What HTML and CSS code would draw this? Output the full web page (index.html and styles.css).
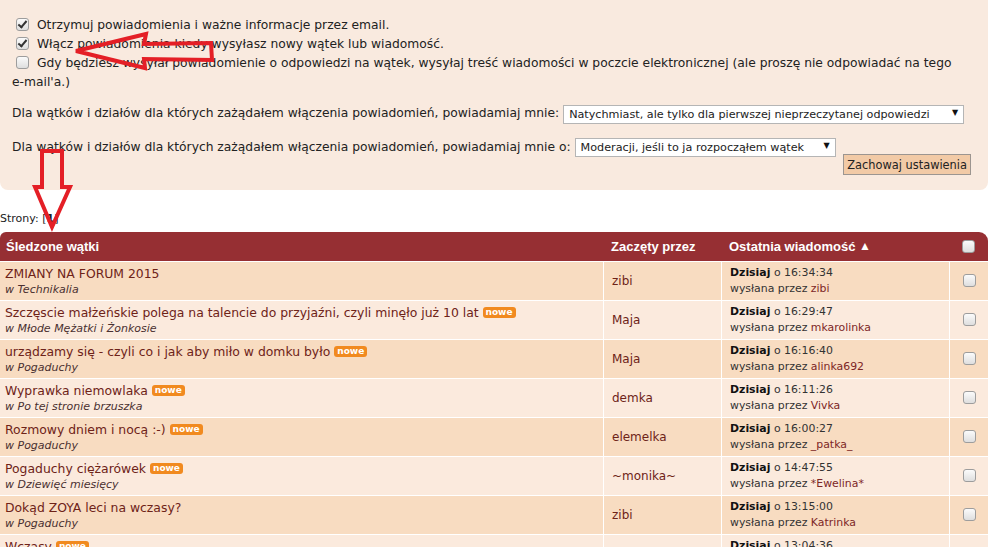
FILE: index.html
```html
<!DOCTYPE html>
<html lang="pl">
<head>
  <meta charset="UTF-8">
  <title>Śledzone wątki</title>
  <link rel="stylesheet" href="styles.css">
</head>
<body>

  <div class="prefs">
    <label class="opt"><input type="checkbox" checked> Otrzymuj powiadomienia i ważne informacje przez email.</label>
    <label class="opt"><input type="checkbox" checked> Włącz powiadomienia kiedy wysyłasz nowy wątek lub wiadomość.</label>
    <label class="opt"><input type="checkbox"> Gdy będziesz wysyłał powiadomienie o odpowiedzi na wątek, wysyłaj treść wiadomości w poczcie elektronicznej (ale proszę nie odpowiadać na tego <span class="nowrap">e-mail'a.)</span></label>

    <div class="setting">
      Dla wątków i działów dla których zażądałem włączenia powiadomień, powiadamiaj mnie:
      <span class="select wide"><select><option>Natychmiast, ale tylko dla pierwszej nieprzeczytanej odpowiedzi</option></select></span>
    </div>
    <div class="setting">
      Dla wątków i działów dla których zażądałem włączenia powiadomień, powiadamiaj mnie o:
      <span class="select"><select><option>Moderacji, jeśli to ja rozpocząłem wątek</option></select></span>
    </div>
    <div class="actions">
      <button class="save-btn">Zachowaj ustawienia</button>
    </div>
  </div>

  <div class="pages">Strony: [<b>1</b>]</div>

  <table class="topics">
    <thead>
      <tr>
        <th class="c-subject">Śledzone wątki</th>
        <th class="c-starter">Zaczęty przez</th>
        <th class="c-last">Ostatnia wiadomość <span class="sort">&#9650;</span></th>
        <th class="c-check"><input type="checkbox"></th>
      </tr>
    </thead>
    <tbody id="topicList"></tbody>
  </table>

  <!-- red arrows drawn on the screenshot -->
  <svg class="marks" width="993" height="547" viewBox="0 0 993 547">
    <path d="M76 51 L146 34 L144 44 L211 43 L212 60 L144 59 L145 68 Z" />
    <path d="M42 151 L62 151 L62 187 L70 187 L52 227 L35 187 L42 187 Z" />
  </svg>

  <script>
    const topics = [
      { title: "ZMIANY NA FORUM 2015", board: "Technikalia", starter: "zibi", time: "16:34:34", last: "zibi", fresh: false },
      { title: "Szczęscie małżeńskie polega na talencie do przyjaźni, czyli minęło już 10 lat", board: "Młode Mężatki i Żonkosie", starter: "Maja", time: "16:29:47", last: "mkarolinka", fresh: true },
      { title: "urządzamy się - czyli co i jak aby miło w domku było", board: "Pogaduchy", starter: "Maja", time: "16:16:40", last: "alinka692", fresh: true },
      { title: "Wyprawka niemowlaka", board: "Po tej stronie brzuszka", starter: "demka", time: "16:11:26", last: "Vivka", fresh: true },
      { title: "Rozmowy dniem i nocą :-)", board: "Pogaduchy", starter: "elemelka", time: "16:00:27", last: "_patka_", fresh: true },
      { title: "Pogaduchy ciężarówek", board: "Dziewięć miesięcy", starter: "~monika~", time: "14:47:55", last: "*Ewelina*", fresh: true },
      { title: "Dokąd ZOYA leci na wczasy?", board: "Pogaduchy", starter: "zibi", time: "13:15:00", last: "Katrinka", fresh: false },
      { title: "Wczasy", board: "Pogaduchy", starter: "zibi", time: "13:04:36", last: "zibi", fresh: true }
    ];

    function renderTopics() {
      const list = document.getElementById("topicList");
      list.innerHTML = "";
      topics.forEach((t, i) => {
        const tr = document.createElement("tr");
        tr.className = i % 2 === 0 ? "odd" : "even";
        tr.innerHTML = `
          <td class="c-subject">
            <a class="title" href="#">${t.title}</a>${t.fresh ? ' <span class="new">nowe</span>' : ''}
            <div class="board">w <a href="#">${t.board}</a></div>
          </td>
          <td class="c-starter"><a href="#">${t.starter}</a></td>
          <td class="c-last">
            <strong>Dzisiaj</strong> o ${t.time}<br>
            wysłana przez <a href="#">${t.last}</a>
          </td>
          <td class="c-check"><input type="checkbox"></td>
        `;
        list.appendChild(tr);
      });
    }

    renderTopics();
  </script>

</body>
</html>
```

FILE: styles.css
```css
:root {
  --panel: #f9eadf;
  --row-odd: #f8dcc1;
  --row-even: #fbeadd;
  --head: #962f33;
  --link: #6e2318;
  --arrow: #e41f26;
}

body {
  font-family: Verdana, "DejaVu Sans", sans-serif;
  font-size: 12.3px;
  color: #222;
  background: #fff;
  margin: 0;
  width: 988px;
  position: relative;
  overflow: hidden;
}

a {
  color: var(--link);
  text-decoration: none;
}

.nowrap {
  white-space: nowrap;
}

.prefs {
  background: var(--panel);
  border-radius: 0 0 8px 8px;
  padding: 16px 17px 15px 12px;
  line-height: 19px;
}

.opt {
  display: block;
}

input[type="checkbox"] {
  appearance: none;
  -webkit-appearance: none;
  width: 13px;
  height: 13px;
  margin: 0 4px 0 4px;
  border: 1px solid #9d9d9d;
  border-radius: 3px;
  background: linear-gradient(#fbfbfb, #dedede);
  vertical-align: -2px;
  position: relative;
}

input[type="checkbox"]:checked::after {
  content: "";
  position: absolute;
  left: 3px;
  top: 0;
  width: 3px;
  height: 7px;
  border: solid #333;
  border-width: 0 2px 2px 0;
  transform: rotate(40deg);
}

.setting {
  margin-top: 11px;
  line-height: 20px;
}

.setting + .setting {
  margin-top: 13px;
}

.select {
  position: relative;
  display: inline-block;
  vertical-align: middle;
}

.select select {
  appearance: none;
  -webkit-appearance: none;
  font: 11.2px Verdana, "DejaVu Sans", sans-serif;
  color: #222;
  background: #fff;
  border: 1px solid #b5b5b5;
  border-radius: 0;
  height: 19px;
  padding: 0 18px 0 5px;
  width: 261px;
}

.select.wide select {
  width: 401px;
}

.select::after {
  content: "\25BC";
  position: absolute;
  right: 6px;
  top: 3px;
  font-size: 8px;
  line-height: 12px;
  color: #111;
  pointer-events: none;
}

.actions {
  display: flex;
  justify-content: flex-end;
  margin-top: -3px;
}

.save-btn {
  font: 11.4px Verdana, "DejaVu Sans", sans-serif;
  color: #222;
  background: #f2caa6;
  border: 1px solid #9c9590;
  padding: 0 3px;
  height: 21px;
  white-space: nowrap;
}

.pages {
  margin: 21px 0 5px;
  font-size: 11px;
  line-height: 16px;
}

.topics {
  width: 988px;
  border-collapse: separate;
  border-spacing: 0;
  table-layout: fixed;
}

.topics th,
.topics td {
  box-sizing: border-box;
}

.topics th {
  background: var(--head);
  color: #fff;
  font: bold 13px "Liberation Sans", Arial, sans-serif;
  text-align: left;
  height: 29px;
  padding: 0 8px;
}

.topics th:first-child {
  border-top-left-radius: 6px;
  padding-left: 6px;
}

.topics th:last-child {
  border-top-right-radius: 9px;
}

.sort {
  font-size: 12px;
  vertical-align: 1px;
}

.topics td {
  height: 39px;
  padding: 0 8px;
  border-top: 1px solid #fff;
  vertical-align: middle;
}

.topics td + td {
  border-left: 1px solid #fff;
}

.odd td {
  background: var(--row-odd);
}

.even td {
  background: var(--row-even);
}

.c-subject {
  width: 603px;
}

.topics td.c-subject {
  padding-left: 5px;
  line-height: 15px;
}

.c-starter {
  width: 118px;
}

.c-last {
  width: 228px;
}

.c-check {
  width: 39px;
}

.topics .c-check {
  text-align: center;
  padding: 0;
}

.title {
  font-size: 12.4px;
}

.new {
  display: inline-block;
  background: #f18a1f;
  color: #fff;
  font-size: 9px;
  font-weight: bold;
  line-height: 11px;
  padding: 0 3px;
  border-radius: 3px;
  vertical-align: 2px;
}

.board {
  font-size: 11px;
  font-style: italic;
  color: #4a3030;
}

.board a {
  color: #4a3030;
}

.topics td.c-starter {
  font-size: 12px;
}

.topics td.c-last {
  font-size: 10.9px;
  line-height: 16px;
  color: #333;
}

.c-last strong {
  color: #111;
}

.c-last a {
  color: #7d2626;
}

.marks {
  position: absolute;
  left: 0;
  top: 0;
  pointer-events: none;
}

.marks path {
  fill: none;
  stroke: var(--arrow);
  stroke-width: 4;
  stroke-linejoin: miter;
}
```
